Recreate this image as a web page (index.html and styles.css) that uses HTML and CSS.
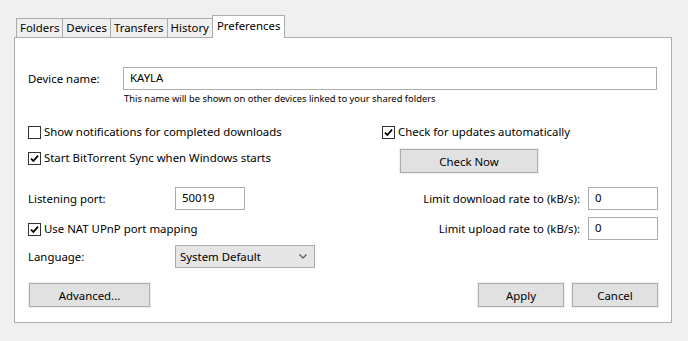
FILE: index.html
```html
<!DOCTYPE html>
<html lang="en">
<head>
    <meta charset="UTF-8">
    <meta name="viewport" content="width=device-width, initial-scale=1.0">
    <title>Preferences</title>
    <link rel="stylesheet" href="styles.css">
</head>
<body>
    <div class="tabs">
        <div class="tab">Folders</div>
        <div class="tab">Devices</div>
        <div class="tab">Transfers</div>
        <div class="tab">History</div>
        <div class="tab active">Preferences</div>
    </div>

    <div class="panel">
        <div class="name-row">
            <span class="name-label">Device name:</span>
            <div class="field wide">KAYLA</div>
        </div>
        <div class="hint">This name will be shown on other devices linked to your shared folders</div>

        <div class="columns">
            <div class="col left">
                <div class="check"><span class="box"></span>Show notifications for completed downloads</div>
                <div class="check gap-small"><span class="box"><svg viewBox="0 0 11 11"><path d="M2 5.6 L4.4 8 L9 2.6"/></svg></span>Start BitTorrent Sync when Windows starts</div>
                <div class="row port-row">
                    <span class="row-label">Listening port:</span>
                    <div class="field short">50019</div>
                </div>
                <div class="check nat"><span class="box"><svg viewBox="0 0 11 11"><path d="M2 5.6 L4.4 8 L9 2.6"/></svg></span>Use NAT UPnP port mapping</div>
                <div class="row lang-row">
                    <span class="row-label">Language:</span>
                    <div class="combo">System Default
                        <svg viewBox="0 0 8 5"><path d="M0.5 0.5 L4 4 L7.5 0.5"/></svg>
                    </div>
                </div>
            </div>

            <div class="col right">
                <div class="check"><span class="box"><svg viewBox="0 0 11 11"><path d="M2 5.6 L4.4 8 L9 2.6"/></svg></span>Check for updates automatically</div>
                <button class="btn check-now">Check Now</button>
                <div class="rate download">
                    <span>Limit download rate to (kB/s):</span>
                    <div class="field rate-field">0</div>
                </div>
                <div class="rate upload">
                    <span>Limit upload rate to (kB/s):</span>
                    <div class="field rate-field">0</div>
                </div>
            </div>
        </div>

        <div class="actions">
            <button class="btn advanced">Advanced...</button>
            <div class="action-right">
                <button class="btn small">Apply</button>
                <button class="btn small">Cancel</button>
            </div>
        </div>
    </div>
</body>
</html>
```

FILE: styles.css
```css
body {
    margin: 0;
    padding: 15px 0 0 14px;
    background-color: #f0f0f0;
    font-family: "Noto Sans", "Open Sans", sans-serif;
    font-size: 11.4px;
    color: #000;
}
.tabs {
    display: flex;
    align-items: flex-end;
    height: 22px;
    padding-left: 2px;
}
.tab {
    box-sizing: border-box;
    height: 19px;
    line-height: 18px;
    padding: 0 3px;
    border: 1px solid #adadad;
    border-bottom: none;
    margin-right: -1px;
    background-color: #f0f0f0;
}
.tab.active {
    height: 23px;
    line-height: 20px;
    margin-bottom: -1px;
    padding: 0 4px;
    background-color: #fff;
    position: relative;
}
.panel {
    box-sizing: border-box;
    width: 658px;
    height: 286px;
    padding: 29px 13px 0 13px;
    border: 1px solid #adadad;
    background-color: #fff;
}
.name-row {
    display: flex;
    align-items: center;
}
.name-label {
    width: 95px;
}
.field {
    box-sizing: border-box;
    height: 23px;
    line-height: 20px;
    padding: 0 6px;
    border: 1px solid #acacac;
    background-color: #fff;
}
.field.wide {
    width: 534px;
}
.hint {
    margin: 2px 0 0 96px;
    font-size: 9.4px;
    line-height: 14px;
}
.columns {
    display: flex;
    margin-top: 16px;
}
.col {
    display: flex;
    flex-direction: column;
}
.col.left {
    width: 354px;
}
.col.right {
    width: 276px;
}
.check {
    display: flex;
    align-items: center;
    gap: 3px;
    height: 20px;
    line-height: 18px;
}
.box {
    box-sizing: border-box;
    width: 13px;
    height: 13px;
    border: 1px solid #333;
    background-color: #fff;
    display: flex;
}
.box svg {
    width: 11px;
    height: 11px;
    fill: none;
    stroke: #000;
    stroke-width: 1.8;
}
.gap-small {
    margin-top: 6px;
}
.row {
    display: flex;
    align-items: center;
}
.row-label {
    width: 147px;
}
.port-row {
    margin-top: 19px;
}
.field.short {
    width: 70px;
}
.nat {
    margin-top: 9px;
}
.lang-row {
    margin-top: 6px;
}
.combo {
    box-sizing: border-box;
    width: 140px;
    height: 23px;
    line-height: 20px;
    padding: 0 4px;
    border: 1px solid #acacac;
    background-color: #e5e5e5;
    display: flex;
    justify-content: space-between;
    align-items: center;
}
.combo svg {
    width: 8px;
    height: 5px;
    margin-right: 3px;
    fill: none;
    stroke: #555;
    stroke-width: 1.2;
}
.btn {
    box-sizing: border-box;
    height: 24px;
    border: 1px solid #adadad;
    background-color: #e1e1e1;
    box-shadow: 0 0 0 1px #efefef;
    font-family: inherit;
    font-size: 11.4px;
    color: #000;
    padding: 0;
}
.check-now {
    width: 138px;
    margin: 7px 0 0 18px;
}
.rate {
    display: flex;
    justify-content: flex-end;
    align-items: center;
    gap: 8px;
}
.download {
    margin-top: 14px;
}
.upload {
    margin-top: 7px;
}
.rate-field {
    width: 70px;
}
.actions {
    display: flex;
    justify-content: space-between;
    margin-top: 15px;
    padding-left: 1px;
    width: 629px;
}
.action-right {
    display: flex;
    gap: 8px;
}
.advanced {
    width: 121px;
}
.btn.small {
    width: 86px;
}
```
